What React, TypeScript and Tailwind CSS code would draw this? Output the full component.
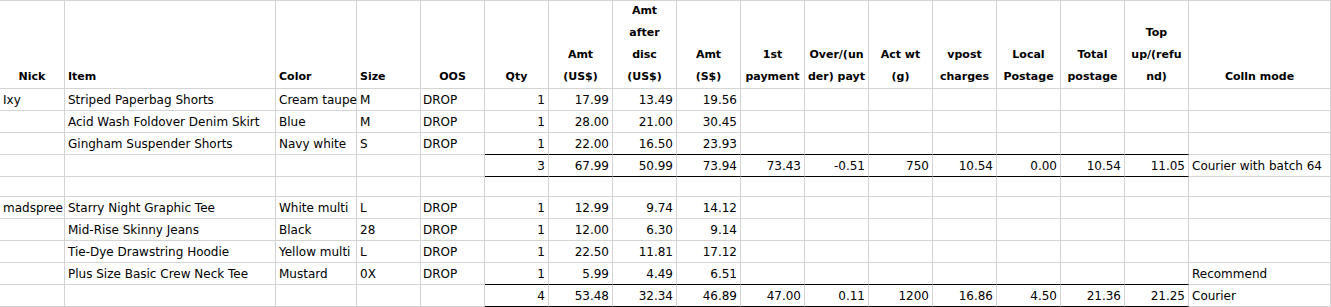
import React from "react";

type Align = "left" | "center" | "right";

interface Col {
  header: string[];
  align: Align;
  num?: boolean;
}

const COLS: Col[] = [
  { header: ["Nick"], align: "center" },
  { header: ["Item"], align: "left" },
  { header: ["Color"], align: "left" },
  { header: ["Size"], align: "left" },
  { header: ["OOS"], align: "center" },
  { header: ["Qty"], align: "center", num: true },
  { header: ["Amt", "(US$)"], align: "center", num: true },
  { header: ["Amt", "after", "disc", "(US$)"], align: "center", num: true },
  { header: ["Amt", "(S$)"], align: "center", num: true },
  { header: ["1st", "payment"], align: "center", num: true },
  { header: ["Over/(un", "der) payt"], align: "center", num: true },
  { header: ["Act wt", "(g)"], align: "center", num: true },
  { header: ["vpost", "charges"], align: "center", num: true },
  { header: ["Local", "Postage"], align: "center", num: true },
  { header: ["Total", "postage"], align: "center", num: true },
  { header: ["Top", "up/(refu", "nd)"], align: "center", num: true },
  { header: ["Colln mode"], align: "center" },
];

interface Row {
  cells: string[];
  height: "h-[22px]" | "h-[20px]";
  // columns 5..15 get a black bottom rule
  rule?: boolean;
}

const pad = (arr: string[]) => {
  const out = [...arr];
  while (out.length < 17) out.push("");
  return out;
};

const ROWS: Row[] = [
  { cells: pad(["Ixy", "Striped Paperbag Shorts", "Cream taupe", "M", "DROP", "1", "17.99", "13.49", "19.56"]), height: "h-[22px]" },
  { cells: pad(["", "Acid Wash Foldover Denim Skirt", "Blue", "M", "DROP", "1", "28.00", "21.00", "30.45"]), height: "h-[22px]" },
  { cells: pad(["", "Gingham Suspender Shorts", "Navy white", "S", "DROP", "1", "22.00", "16.50", "23.93"]), height: "h-[22px]", rule: true },
  {
    cells: ["", "", "", "", "", "3", "67.99", "50.99", "73.94", "73.43", "-0.51", "750", "10.54", "0.00", "10.54", "11.05", "Courier with batch 64"],
    height: "h-[22px]",
    rule: true,
  },
  { cells: pad([]), height: "h-[20px]" },
  { cells: pad(["madspree", "Starry Night Graphic Tee", "White multi", "L", "DROP", "1", "12.99", "9.74", "14.12"]), height: "h-[22px]" },
  { cells: pad(["", "Mid-Rise Skinny Jeans", "Black", "28", "DROP", "1", "12.00", "6.30", "9.14"]), height: "h-[22px]" },
  { cells: pad(["", "Tie-Dye Drawstring Hoodie", "Yellow multi", "L", "DROP", "1", "22.50", "11.81", "17.12"]), height: "h-[22px]" },
  {
    cells: pad(["", "Plus Size Basic Crew Neck Tee", "Mustard", "0X", "DROP", "1", "5.99", "4.49", "6.51", "", "", "", "", "", "", "", "Recommend"]),
    height: "h-[22px]",
    rule: true,
  },
  {
    cells: ["", "", "", "", "", "4", "53.48", "32.34", "46.89", "47.00", "0.11", "1200", "16.86", "4.50", "21.36", "21.25", "Courier"],
    height: "h-[22px]",
    rule: true,
  },
];

const TEXT_FONT = "font-['DejaVu_Sans',sans-serif] text-[12px]";
const NUM_FONT = "font-['DejaVu_Sans',sans-serif] text-[12px]";

export default function App() {
  return (
    <div className="w-[1331px] h-[307px] overflow-hidden bg-white text-black">
      <div className="grid grid-cols-[65px_211px_81px_repeat(13,64px)_142px]">
        {/* Header row */}
        {COLS.map((c, i) => (
          <div
            key={`h${i}`}
            className={`h-[89px] border-t border-b border-r border-[#d4d4d4] flex flex-col justify-end font-['DejaVu_Sans',sans-serif] text-[11px] font-bold leading-[22px] whitespace-nowrap ${
              c.align === "center" ? "items-center" : "items-start pl-[3px]"
            }`}
          >
            {c.header.map((line) => (
              <span key={line}>{line}</span>
            ))}
          </div>
        ))}

        {/* Body rows */}
        {ROWS.map((row, r) =>
          row.cells.map((val, i) => {
            const col = COLS[i];
            const isNum = col.num === true;
            const ruled = row.rule && i >= 5 && i <= 15;
            return (
              <div
                key={`r${r}c${i}`}
                className={`${row.height} border-b border-r border-r-[#d4d4d4] ${
                  ruled ? "border-b-black" : "border-b-[#d4d4d4]"
                } flex items-center whitespace-nowrap leading-none ${
                  isNum ? `justify-end pr-[3px] ${NUM_FONT}` : `justify-start ${i === 4 ? "pl-[2px]" : "pl-[3px]"} ${TEXT_FONT}`
                }`}
              >
                {val}
              </div>
            );
          })
        )}
      </div>
    </div>
  );
}
